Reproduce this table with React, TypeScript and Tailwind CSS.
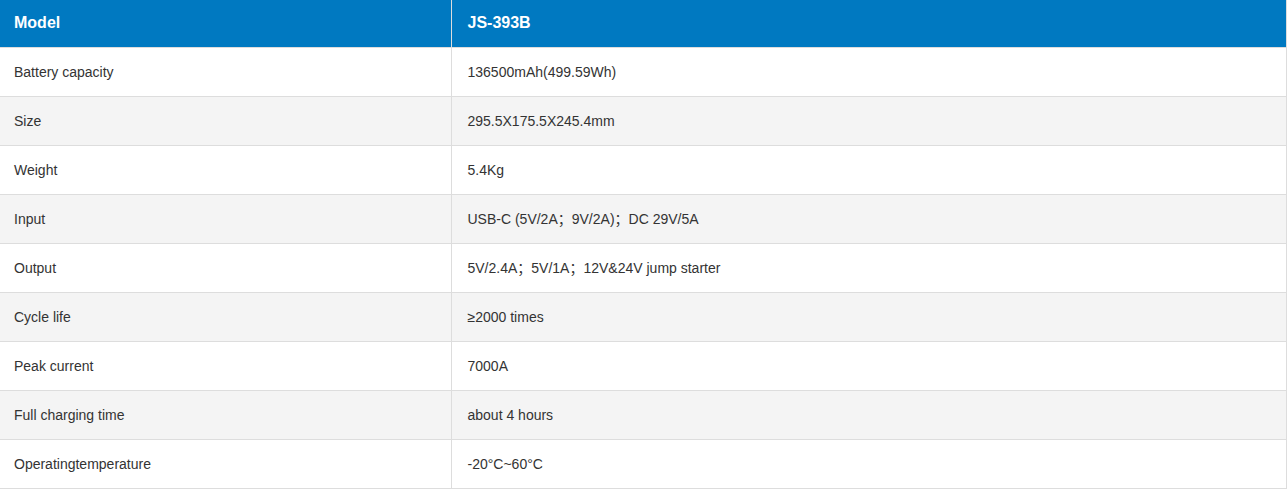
const rows: [string, string][] = [
  ["Battery capacity", "136500mAh(499.59Wh)"],
  ["Size", "295.5X175.5X245.4mm"],
  ["Weight", "5.4Kg"],
  ["Input", "USB-C (5V/2A；9V/2A)；DC 29V/5A"],
  ["Output", "5V/2.4A；5V/1A；12V&24V jump starter"],
  ["Cycle life", "≥2000 times"],
  ["Peak current", "7000A"],
  ["Full charging time", "about 4 hours"],
  ["Operatingtemperature", "-20°C~60°C"],
];

export default function App() {
  return (
    <div className="w-[1288px] bg-white font-['Liberation_Sans','Noto_Sans_CJK_SC',Arial,sans-serif]">
      <table className="w-[1287px] table-fixed border-collapse">
        <thead>
          <tr className="h-[47px] bg-[#0079c1] text-white">
            <th className="w-[451px] border-r border-b border-[#dddddd] px-[14px] text-left text-[16px] font-bold">
              Model
            </th>
            <th className="border-r border-b border-[#dddddd] px-[16px] text-left text-[16px] font-bold">
              JS-393B
            </th>
          </tr>
        </thead>
        <tbody>
          {rows.map(([k, v], i) => (
            <tr key={k} className={`h-[49px] ${i % 2 === 1 ? "bg-[#f4f4f4]" : "bg-white"} text-[14px] text-[#333333]`}>
              <td className="border-r border-b border-[#dddddd] px-[14px] pt-[2px]">{k}</td>
              <td className="border-r border-b border-[#dddddd] px-[16px] pt-[2px]">{v}</td>
            </tr>
          ))}
        </tbody>
      </table>
    </div>
  );
}
